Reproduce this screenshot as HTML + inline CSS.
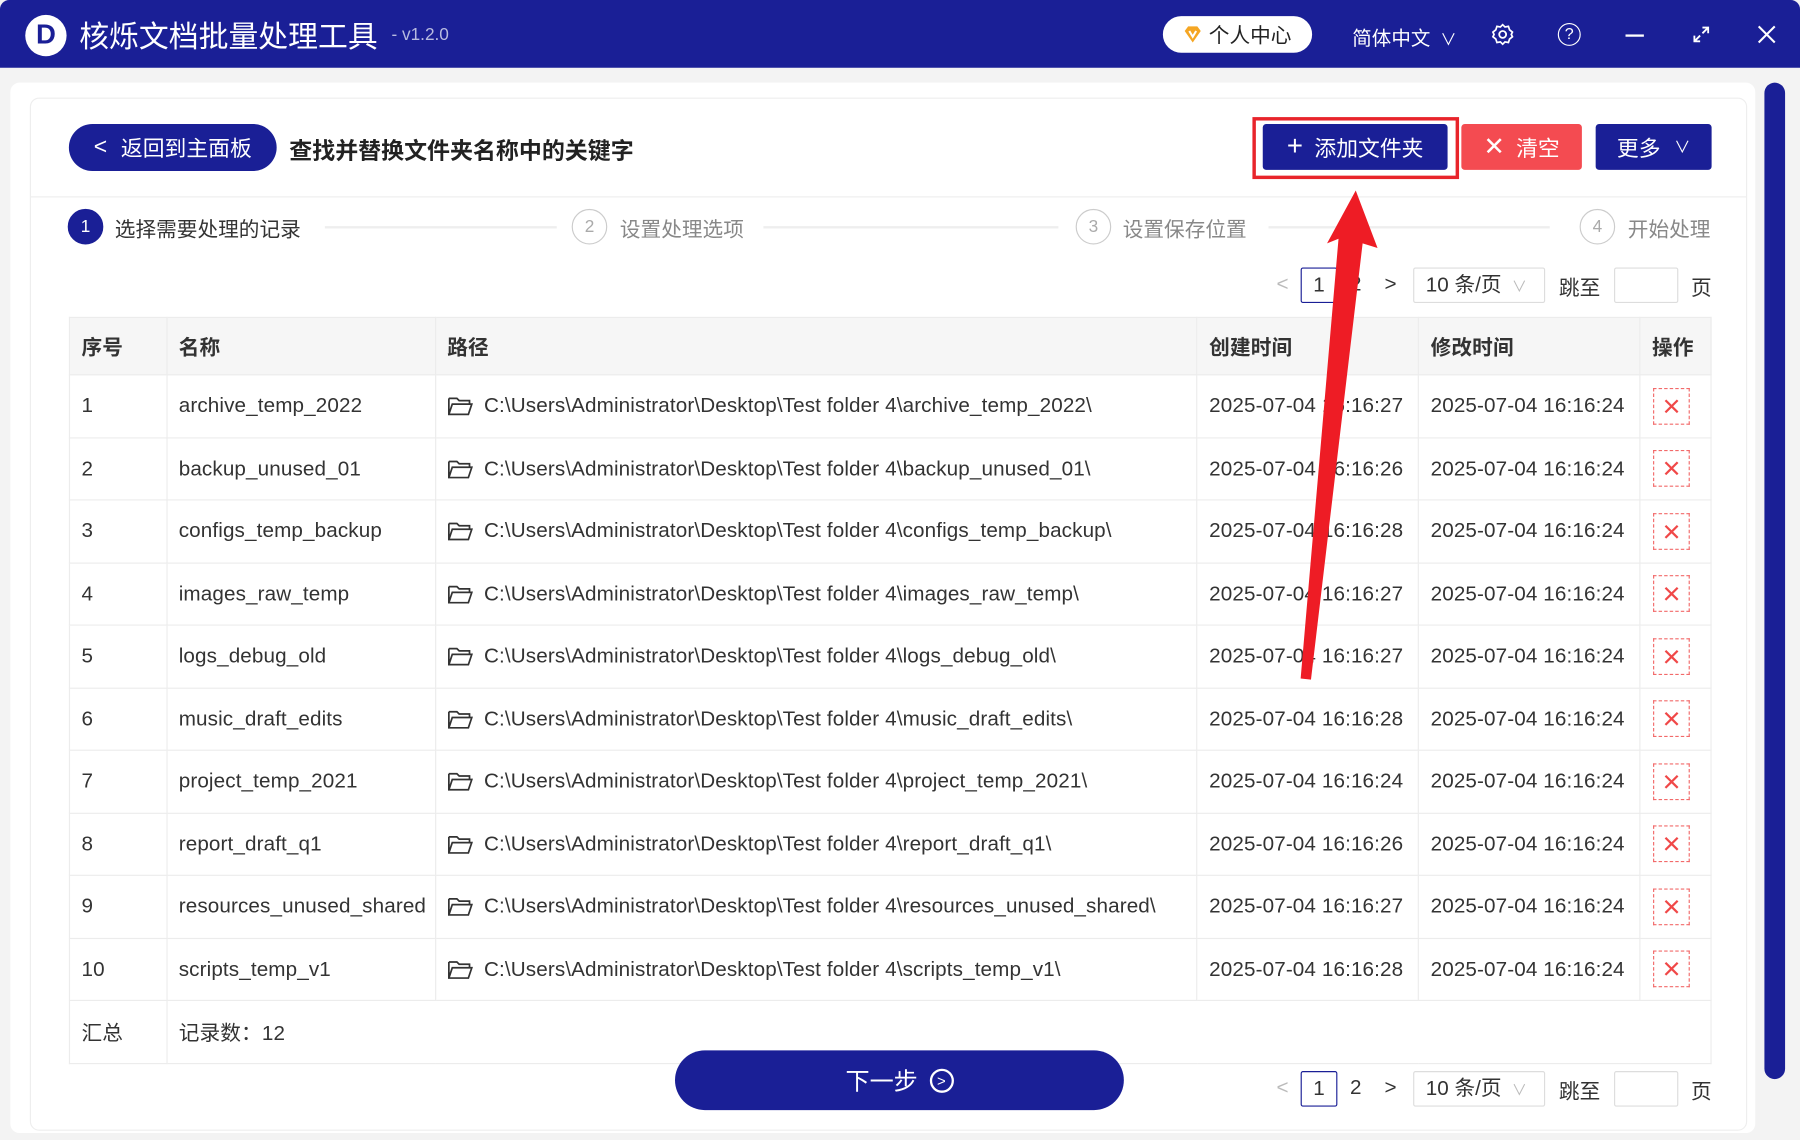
<!DOCTYPE html>
<html><head><meta charset="utf-8"><style>
*{box-sizing:border-box;margin:0;padding:0}
html,body{width:1800px;height:1140px;overflow:hidden;background:#f3f3f3}
body{font-family:"Liberation Sans","Noto Sans CJK SC",sans-serif;color:#333}
#w{position:absolute;left:0;top:0;width:1568px;height:993px;transform:scale(1.14796);transform-origin:0 0;background:#f3f3f3}
.a{position:absolute}
.bar{left:0;top:0;width:1568px;height:59px;background:#1a1f96;border-radius:8px 8px 0 0}
.wt{color:#fff}
.btn{position:absolute;display:flex;align-items:center;justify-content:center;color:#fff;font-size:19px;border-radius:3px}
.step{position:absolute;top:182px;width:31px;height:31px;border-radius:50%;border:1.5px solid #ccc;color:#aaa;font-size:15px;display:flex;align-items:center;justify-content:center}
.stl{position:absolute;top:186px;font-size:18px;color:#888}
.ln{position:absolute;top:197px;height:2px;background:#eee}
table{position:absolute;left:60px;top:276px;width:1431px;border-collapse:collapse;font-size:18px;color:#333;letter-spacing:0.1px}
td,th{border:1px solid #ececec;padding:0 0 0 10px;text-align:left;white-space:nowrap}
th{height:50px;background:#f6f6f6;font-weight:bold;color:#333}
td{height:54.5px}
.del{display:inline-block;width:32px;height:32px;border:1px dashed #f26a6a;color:#f04848;text-align:center;line-height:30px;font-size:27px;font-weight:300;margin-left:1px}
.fold{display:inline-block;vertical-align:-3px;margin-right:10px}
.pg{position:absolute;font-size:18px;color:#333}
</style></head><body><div id="w">
<div class="a bar"></div>
<div class="a" style="left:22px;top:13px;width:36px;height:36px;border-radius:50%;background:#fff;display:flex;align-items:center;justify-content:center;font-weight:bold;font-size:24px;color:#1a1f96">D</div>
<div class="a wt" style="left:69px;top:12px;font-size:26px">核烁文档批量处理工具</div>
<div class="a" style="left:341px;top:22px;font-size:15px;color:#b8bbe0">- v1.2.0</div>
<div class="a" style="left:1013px;top:14px;width:130px;height:32px;border-radius:16px;background:#fff;font-size:18px;color:#222;display:flex;align-items:center;padding-left:18px"><svg width="16" height="16" viewBox="0 0 16 16" style="margin-right:6px"><path d="M1 5 L4 1 H12 L15 5 L8 15 Z" fill="#f5a623"/><path d="M5 5 L8 10 L11 5" stroke="#fff" stroke-width="1.8" fill="none"/></svg>个人中心</div>
<div class="a wt" style="left:1178px;top:19px;font-size:17px">简体中文 <span style="font-size:14px;margin-left:4px">∨</span></div>
<svg class="a" style="left:1299px;top:20px" width="20" height="20" viewBox="0 0 20 20"><circle cx="10" cy="10" r="3" stroke="#fff" stroke-width="1.6" fill="none"/><path d="M10 1.5 L12 3.5 L15 3 L16 6 L18.5 8 L17.5 10 L18.5 12 L16 14 L15 17 L12 16.5 L10 18.5 L8 16.5 L5 17 L4 14 L1.5 12 L2.5 10 L1.5 8 L4 6 L5 3 L8 3.5 Z" stroke="#fff" stroke-width="1.5" fill="none"/></svg>
<div class="a" style="left:1357px;top:20px;width:20px;height:20px;border:1.6px solid #fff;border-radius:50%;color:#fff;font-size:14px;text-align:center;line-height:17px">?</div>
<div class="a" style="left:1416px;top:30px;width:16px;height:2px;background:#fff"></div>
<svg class="a" style="left:1474px;top:22px" width="16" height="16" viewBox="0 0 16 16"><path d="M9 2 H14 V7 M14 2 L9 7 M7 14 H2 V9 M2 14 L7 9" stroke="#fff" stroke-width="1.6" fill="none"/></svg>
<svg class="a" style="left:1531px;top:22px" width="16" height="16" viewBox="0 0 16 16"><path d="M1 1 L15 15 M15 1 L1 15" stroke="#fff" stroke-width="1.8"/></svg>

<div class="a" style="left:9px;top:72px;width:1520px;height:915px;background:#fff;border-radius:8px"></div>
<div class="a" style="left:26px;top:85px;width:1496px;height:900px;border:1px solid #eee;border-radius:8px"></div>
<div class="a" style="left:1537px;top:72px;width:18px;height:868px;background:#1a1f96;border-radius:9px"></div>
<div class="a" style="left:27px;top:171px;width:1494px;height:1px;background:#eee"></div>

<div class="btn" style="left:60px;top:108px;width:181px;height:41px;border-radius:21px;background:#1a1f96"><span style="margin-right:12px;font-size:20px">&lt;</span>返回到主面板</div>
<div class="a" style="left:252px;top:115px;font-size:20px;font-weight:bold;color:#222">查找并替换文件夹名称中的关键字</div>
<div class="a" style="left:1091px;top:102px;width:180px;height:54px;border:3px solid #e8242b"></div>
<div class="btn" style="left:1100px;top:108px;width:161px;height:40px;background:#1a1f96"><span style="font-size:24px;margin-right:10px;font-weight:300">+</span>添加文件夹</div>
<div class="btn" style="left:1273px;top:108px;width:105px;height:40px;background:#f44b51"><span style="font-size:22px;margin-right:10px">✕</span>清空</div>
<div class="btn" style="left:1390px;top:108px;width:101px;height:40px;background:#1a1f96">更多<span style="font-size:14px;margin-left:12px">∨</span></div>

<div class="step" style="left:59px;background:#1a1f96;border-color:#1a1f96;color:#fff">1</div>
<div class="stl" style="left:100px;color:#333">选择需要处理的记录</div>
<div class="ln" style="left:283px;width:202px"></div>
<div class="step" style="left:498px">2</div><div class="stl" style="left:540px">设置处理选项</div>
<div class="ln" style="left:665px;width:257px"></div>
<div class="step" style="left:937px">3</div><div class="stl" style="left:978px">设置保存位置</div>
<div class="ln" style="left:1105px;width:245px"></div>
<div class="step" style="left:1376px">4</div><div class="stl" style="left:1418px">开始处理</div>

<div class="pg" style="left:1112px;top:237px;color:#bbb">&lt;</div>
<div class="pg" style="left:1133px;top:233px;width:32px;height:31px;border:1px solid #1a1f96;border-radius:2px;text-align:center;line-height:29px">1</div>
<div class="pg" style="left:1176px;top:237px">2</div>
<div class="pg" style="left:1206px;top:237px">&gt;</div>
<div class="pg" style="left:1231px;top:233px;width:115px;height:31px;border:1px solid #ddd;border-radius:2px;padding-left:10px;line-height:29px">10 条/页 <span style="color:#bbb;font-size:13px;margin-left:4px">∨</span></div>
<div class="pg" style="left:1358px;top:237px">跳至</div>
<div class="pg" style="left:1406px;top:233px;width:56px;height:31px;border:1px solid #ddd;border-radius:2px"></div>
<div class="pg" style="left:1473px;top:237px">页</div>

<table>
<colgroup><col style="width:85px"><col style="width:234px"><col style="width:664px"><col style="width:193px"><col style="width:193px"><col style="width:62px"></colgroup>
<tr><th>序号</th><th>名称</th><th>路径</th><th>创建时间</th><th>修改时间</th><th>操作</th></tr>
<tr><td>1</td><td>archive_temp_2022</td><td><svg class="fold" width="22" height="17" viewBox="0 0 22 17"><path d="M1 2 H8 L10 4 H19 V7 M1 2 V16 H18 L21 7 H4 L1 16" stroke="#333" stroke-width="1.5" fill="none"/></svg>C:\Users\Administrator\Desktop\Test folder 4\archive_temp_2022\</td><td>2025-07-04 16:16:27</td><td>2025-07-04 16:16:24</td><td><span class="del">×</span></td></tr>
<tr><td>2</td><td>backup_unused_01</td><td><svg class="fold" width="22" height="17" viewBox="0 0 22 17"><path d="M1 2 H8 L10 4 H19 V7 M1 2 V16 H18 L21 7 H4 L1 16" stroke="#333" stroke-width="1.5" fill="none"/></svg>C:\Users\Administrator\Desktop\Test folder 4\backup_unused_01\</td><td>2025-07-04 16:16:26</td><td>2025-07-04 16:16:24</td><td><span class="del">×</span></td></tr>
<tr><td>3</td><td>configs_temp_backup</td><td><svg class="fold" width="22" height="17" viewBox="0 0 22 17"><path d="M1 2 H8 L10 4 H19 V7 M1 2 V16 H18 L21 7 H4 L1 16" stroke="#333" stroke-width="1.5" fill="none"/></svg>C:\Users\Administrator\Desktop\Test folder 4\configs_temp_backup\</td><td>2025-07-04 16:16:28</td><td>2025-07-04 16:16:24</td><td><span class="del">×</span></td></tr>
<tr><td>4</td><td>images_raw_temp</td><td><svg class="fold" width="22" height="17" viewBox="0 0 22 17"><path d="M1 2 H8 L10 4 H19 V7 M1 2 V16 H18 L21 7 H4 L1 16" stroke="#333" stroke-width="1.5" fill="none"/></svg>C:\Users\Administrator\Desktop\Test folder 4\images_raw_temp\</td><td>2025-07-04 16:16:27</td><td>2025-07-04 16:16:24</td><td><span class="del">×</span></td></tr>
<tr><td>5</td><td>logs_debug_old</td><td><svg class="fold" width="22" height="17" viewBox="0 0 22 17"><path d="M1 2 H8 L10 4 H19 V7 M1 2 V16 H18 L21 7 H4 L1 16" stroke="#333" stroke-width="1.5" fill="none"/></svg>C:\Users\Administrator\Desktop\Test folder 4\logs_debug_old\</td><td>2025-07-04 16:16:27</td><td>2025-07-04 16:16:24</td><td><span class="del">×</span></td></tr>
<tr><td>6</td><td>music_draft_edits</td><td><svg class="fold" width="22" height="17" viewBox="0 0 22 17"><path d="M1 2 H8 L10 4 H19 V7 M1 2 V16 H18 L21 7 H4 L1 16" stroke="#333" stroke-width="1.5" fill="none"/></svg>C:\Users\Administrator\Desktop\Test folder 4\music_draft_edits\</td><td>2025-07-04 16:16:28</td><td>2025-07-04 16:16:24</td><td><span class="del">×</span></td></tr>
<tr><td>7</td><td>project_temp_2021</td><td><svg class="fold" width="22" height="17" viewBox="0 0 22 17"><path d="M1 2 H8 L10 4 H19 V7 M1 2 V16 H18 L21 7 H4 L1 16" stroke="#333" stroke-width="1.5" fill="none"/></svg>C:\Users\Administrator\Desktop\Test folder 4\project_temp_2021\</td><td>2025-07-04 16:16:24</td><td>2025-07-04 16:16:24</td><td><span class="del">×</span></td></tr>
<tr><td>8</td><td>report_draft_q1</td><td><svg class="fold" width="22" height="17" viewBox="0 0 22 17"><path d="M1 2 H8 L10 4 H19 V7 M1 2 V16 H18 L21 7 H4 L1 16" stroke="#333" stroke-width="1.5" fill="none"/></svg>C:\Users\Administrator\Desktop\Test folder 4\report_draft_q1\</td><td>2025-07-04 16:16:26</td><td>2025-07-04 16:16:24</td><td><span class="del">×</span></td></tr>
<tr><td>9</td><td>resources_unused_shared</td><td><svg class="fold" width="22" height="17" viewBox="0 0 22 17"><path d="M1 2 H8 L10 4 H19 V7 M1 2 V16 H18 L21 7 H4 L1 16" stroke="#333" stroke-width="1.5" fill="none"/></svg>C:\Users\Administrator\Desktop\Test folder 4\resources_unused_shared\</td><td>2025-07-04 16:16:27</td><td>2025-07-04 16:16:24</td><td><span class="del">×</span></td></tr>
<tr><td>10</td><td>scripts_temp_v1</td><td><svg class="fold" width="22" height="17" viewBox="0 0 22 17"><path d="M1 2 H8 L10 4 H19 V7 M1 2 V16 H18 L21 7 H4 L1 16" stroke="#333" stroke-width="1.5" fill="none"/></svg>C:\Users\Administrator\Desktop\Test folder 4\scripts_temp_v1\</td><td>2025-07-04 16:16:28</td><td>2025-07-04 16:16:24</td><td><span class="del">×</span></td></tr>
<tr><td style="height:46px">汇总</td><td colspan="5" style="border-left:1px solid #ececec">记录数：12</td></tr>
</table>

<div class="btn" style="left:588px;top:915px;width:391px;height:52px;border-radius:26px;background:#1a1f96;font-size:21px">下一步<span style="display:inline-block;width:21px;height:21px;border:2px solid #fff;border-radius:50%;font-size:13px;line-height:17px;text-align:center;margin-left:10px">&gt;</span></div>

<div class="pg" style="left:1112px;top:937px;color:#bbb">&lt;</div>
<div class="pg" style="left:1133px;top:933px;width:32px;height:31px;border:1px solid #1a1f96;border-radius:2px;text-align:center;line-height:29px">1</div>
<div class="pg" style="left:1176px;top:937px">2</div>
<div class="pg" style="left:1206px;top:937px">&gt;</div>
<div class="pg" style="left:1231px;top:933px;width:115px;height:31px;border:1px solid #ddd;border-radius:2px;padding-left:10px;line-height:29px">10 条/页 <span style="color:#bbb;font-size:13px;margin-left:4px">∨</span></div>
<div class="pg" style="left:1358px;top:937px">跳至</div>
<div class="pg" style="left:1406px;top:933px;width:56px;height:31px;border:1px solid #ddd;border-radius:2px"></div>
<div class="pg" style="left:1473px;top:937px">页</div>

<svg class="a" style="left:0;top:0" width="1568" height="993"><polygon points="1181,166 1200,216 1187,212 1142,592 1133,591 1166,208 1156,212" fill="#ee1c25"/></svg>
</div></body></html>
